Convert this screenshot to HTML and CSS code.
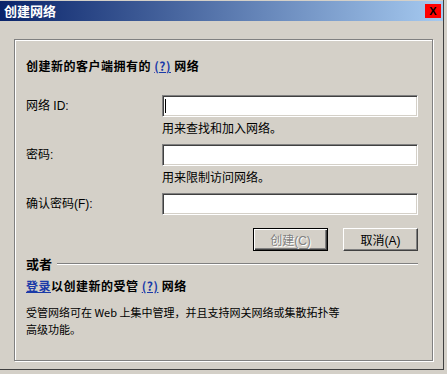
FILE: index.html
```html
<!DOCTYPE html>
<html lang="zh-CN">
<head>
    <meta charset="UTF-8">
    <title>创建网络</title>
    <link rel="stylesheet" href="styles.css">
</head>
<body>
    <div class="window">
        <div class="titlebar">
            <span class="title">创建网络</span>
            <div class="close">X</div>
        </div>

        <div class="panel">
            <p class="heading">创建新的客户端拥有的 <a href="#">(?)</a> 网络</p>

            <div class="form">
                <label class="label">网络 ID:</label>
                <div class="field">
                    <div class="textbox"><span class="caret"></span></div>
                    <p class="hint">用来查找和加入网络。</p>
                </div>

                <label class="label">密码:</label>
                <div class="field">
                    <div class="textbox"></div>
                    <p class="hint">用来限制访问网络。</p>
                </div>

                <label class="label">确认密码(F):</label>
                <div class="field">
                    <div class="textbox"></div>
                </div>
            </div>

            <div class="actions">
                <button class="btn default" disabled>创建(C)</button>
                <button class="btn">取消(A)</button>
            </div>

            <div class="divider">
                <span>或者</span>
                <div class="rule"></div>
            </div>

            <p class="heading second"><a href="#">登录</a>以创建新的受管 <a href="#">(?)</a> 网络</p>

            <p class="note">受管网络可在 Web 上集中管理，并且支持网关网络或集散拓扑等<br>高级功能。</p>
        </div>
    </div>
</body>
</html>
```

FILE: styles.css
```css
body {
    margin: 0;
    background-color: #d4d0c8;
    font-family: "Liberation Sans", "Noto Sans CJK SC", sans-serif;
    font-size: 12px;
    color: #000;
}

p {
    margin: 0;
}

.window {
    width: 444px;
    height: 370px;
    padding-top: 1px;
    box-sizing: border-box;
    border-right: 1px solid #404040;
    border-bottom: 1px solid #404040;
}

.titlebar {
    display: grid;
    grid-template-columns: 1fr 16px;
    align-items: center;
    height: 20px;
    padding: 0 2px 0 4px;
    background: linear-gradient(to right, #0a246a, #a6caf0);
}

.title {
    color: #fff;
    font-family: "Noto Sans CJK SC", sans-serif;
    font-weight: bold;
    font-size: 13px;
    line-height: 20px;
}

.close {
    height: 14px;
    box-sizing: border-box;
    background-color: red;
    color: #000;
    font-weight: bold;
    font-size: 11px;
    line-height: 14px;
    text-align: center;
}

.panel {
    width: 419px;
    height: 322px;
    margin: 18px 0 0 14px;
    padding: 18px 14px 0 11px;
    box-sizing: border-box;
    border: 1px solid #808080;
    box-shadow: 1px 1px 0 #fff, inset 1px 1px 0 #fff;
}

.heading {
    font-family: "Noto Sans CJK SC", sans-serif;
    font-weight: bold;
    font-size: 12px;
    line-height: 16px;
    letter-spacing: 0.5px;
}

.heading a {
    color: #1a3aa8;
    text-decoration: underline;
}

.form {
    display: grid;
    grid-template-columns: 136px 256px;
    row-gap: 5px;
    margin-top: 21px;
}

.label {
    line-height: 22px;
}

.textbox {
    position: relative;
    height: 22px;
    box-sizing: border-box;
    background-color: #fff;
    border: 1px solid;
    border-color: #808080 #fff #fff #808080;
    box-shadow: inset 1px 1px 0 #404040, inset -1px -1px 0 #d4d0c8;
}

.caret {
    position: absolute;
    left: 2px;
    top: 3px;
    width: 1px;
    height: 14px;
    background-color: #000;
}

.hint {
    line-height: 22px;
    font-family: "Noto Sans CJK SC", sans-serif;
}

.actions {
    display: flex;
    justify-content: flex-end;
    gap: 15px;
    margin-top: 13px;
}

.btn {
    width: 75px;
    height: 23px;
    padding: 0;
    font-family: "Liberation Sans", "Noto Sans CJK SC", sans-serif;
    font-size: 12px;
    color: #000;
    background-color: #d4d0c8;
    border: 1px solid;
    border-color: #fff #404040 #404040 #fff;
    box-shadow: inset -1px -1px 0 #808080, inset 1px 1px 0 #d4d0c8;
}

.btn.default {
    border-color: #000;
    box-shadow: inset 1px 1px 0 #fff, inset -1px -1px 0 #404040, inset -2px -2px 0 #808080;
}

.btn:disabled {
    color: #808080;
    text-shadow: 1px 1px 0 #fff;
}

.divider {
    display: flex;
    align-items: center;
    gap: 5px;
    margin-top: 5px;
    font-family: "Noto Sans CJK SC", sans-serif;
    font-weight: bold;
    font-size: 13px;
    line-height: 16px;
}

.rule {
    flex: 1;
    border-top: 1px solid #808080;
    border-bottom: 1px solid #fff;
}

.heading.second {
    margin-top: 6px;
}

.note {
    margin-top: 10px;
    font-family: "Noto Sans CJK SC", sans-serif;
    font-size: 11px;
    line-height: 17px;
}
```
